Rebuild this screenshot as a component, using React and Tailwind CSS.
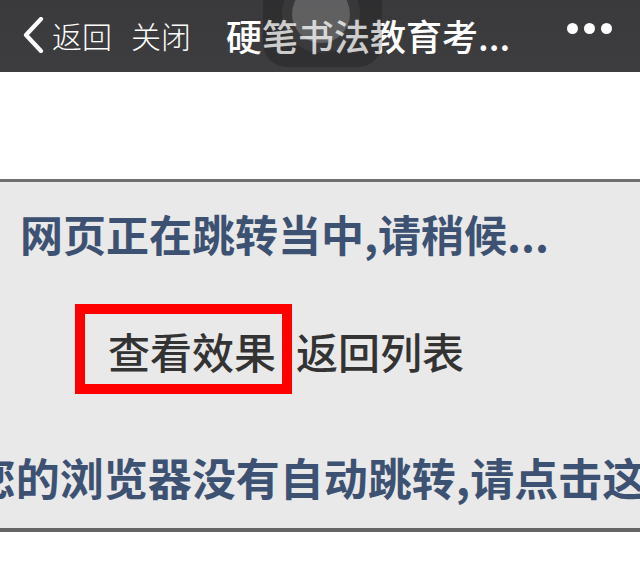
export default function App() {
  const font = { fontFamily: '"Noto Sans CJK SC", "Noto Sans", sans-serif' };
  return (
    <div className="w-[640px] h-[585px] bg-white overflow-hidden" style={font}>
      {/* Header */}
      <div className="relative h-[72px] bg-gradient-to-b from-[#3a3a3c] to-[#3d3d40] flex items-center text-white">
        <div className="flex items-center pl-[22px] -mt-[2px]">
          <svg width="22" height="36" viewBox="0 0 22 36" className="mr-[8px]">
            <path d="M19 2 L4 18 L19 34" fill="none" stroke="white" strokeWidth="4.2" strokeLinecap="round" strokeLinejoin="round" />
          </svg>
          <span className="text-[30px] leading-[30px] font-light">返回</span>
          <span className="text-[30px] leading-[30px] font-light ml-[19px]">关闭</span>
        </div>
        <div className="ml-[35px] -mt-[2px] text-[36px] leading-[36px] font-medium">硬笔书法教育考...</div>
        <div className="ml-auto mr-[28px] -mt-[16px] flex gap-[6px]">
          <span className="w-[11px] h-[11px] rounded-full bg-white" />
          <span className="w-[11px] h-[11px] rounded-full bg-white" />
          <span className="w-[11px] h-[11px] rounded-full bg-white" />
        </div>
        {/* overlay lens */}
        <div className="absolute left-[263px] top-[-20px] w-[119px] h-[87px] rounded-[24px] bg-black/20 overflow-hidden">
          <div className="absolute left-[19px] top-[-5px] w-[78px] h-[78px] rounded-full bg-white/5" />
          <div className="absolute left-[29px] top-[5px] w-[58px] h-[58px] rounded-full bg-white/20" />
        </div>
      </div>

      {/* White space */}
      <div className="h-[107px]" />

      {/* Gray box */}
      <div className="border-t-[3px] border-b-[4px] border-t-[#707070] border-b-[#656565] bg-[#e9e9e9] pt-[29px] pb-[29px]">
        <div className="pl-[20px] text-[43px] leading-[44px] font-bold text-[#3d5272] whitespace-nowrap">
          网页正在跳转当中,请稍候...
        </div>
        <div className="mt-[49px] pl-[75px] flex items-baseline text-[42px] leading-[44px] font-medium text-[#333333]">
          <span className="inline-block h-[90px] border-[10px] border-[#ff0000] pl-[23px] pr-[6px] pt-[15px] pb-[11px]">
            查看效果
          </span>
          <span className="ml-[4px]">返回列表</span>
        </div>
        <div className="mt-[61px] flex justify-center pl-[22px] whitespace-nowrap text-[44px] leading-[44px] font-bold text-[#3d5272]">
          <span>您的浏览器没有自动跳转,请点击这里</span>
        </div>
      </div>
    </div>
  );
}
